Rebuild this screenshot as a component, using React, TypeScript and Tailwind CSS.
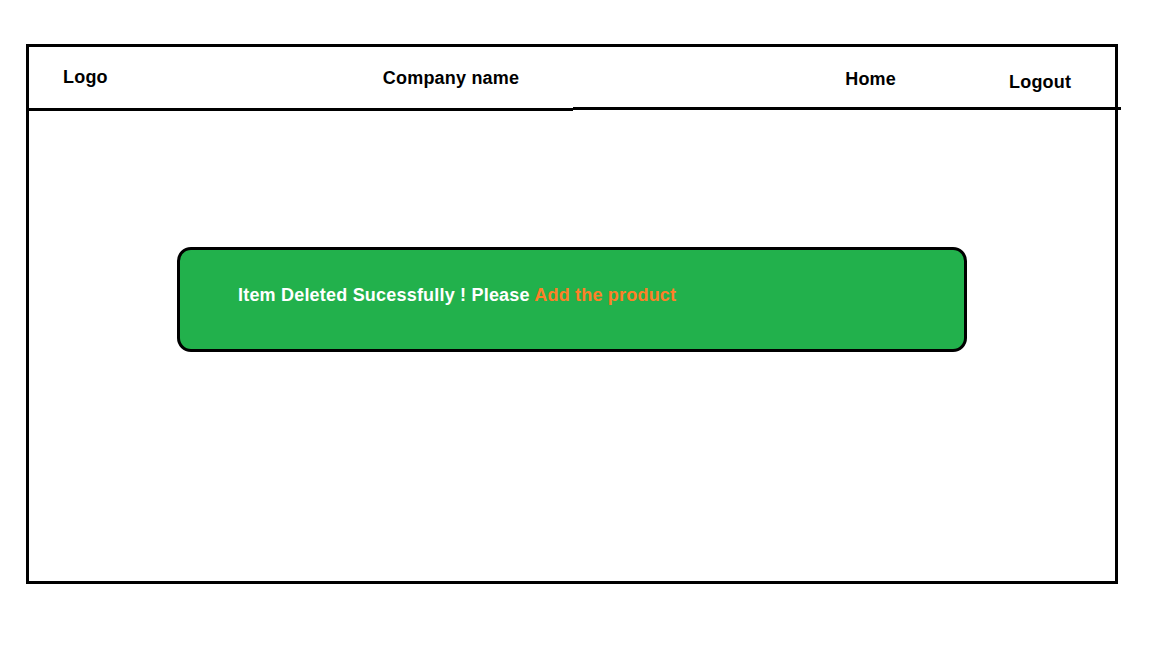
import React from 'react';

export default function App() {
  return (
    <div className="w-[1152px] h-[648px] bg-white font-['Liberation_Sans',Arial,sans-serif] font-bold text-[18px] leading-[20px] tracking-[0.2px] text-black">
      <div className="pt-[44px] pl-[26px]">
        <div className="w-[1092px] h-[540px] border-[3px] border-black flex flex-col">
          {/* Header */}
          <div className="h-[60px] flex items-start">
            <span className="ml-[34px] mt-[20px]">Logo</span>
            <span className="ml-[275px] mt-[21px]">Company name</span>
            <span className="ml-[326px] mt-[22px]">Home</span>
            <span className="ml-[113px] mt-[25px]">Logout</span>
          </div>
          <div className="flex items-start w-[calc(100%+6px)]">
            <div className="w-[544px] h-[3px] mt-[1px] bg-black" />
            <div className="flex-1 h-[3px] bg-black" />
          </div>

          {/* Alert */}
          <div className="mt-[136px] ml-[148px] w-[790px] h-[105px] rounded-[14px] border-[3px] border-black bg-[#22b14c] pt-[35px] pl-[58px]">
            <p className="text-white">
              Item Deleted Sucessfully ! Please <span className="text-[#ff7f27]">Add the product</span>
            </p>
          </div>
        </div>
      </div>
    </div>
  );
}
